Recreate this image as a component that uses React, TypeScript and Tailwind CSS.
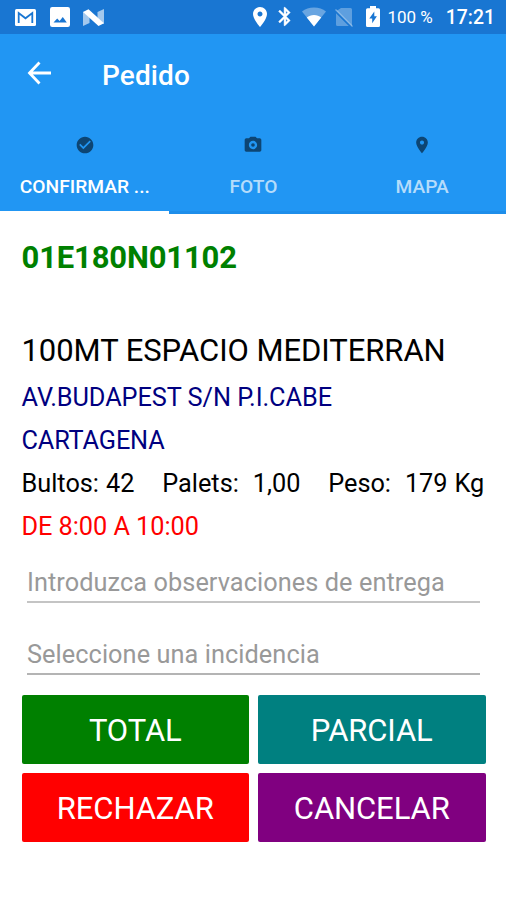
import React, { useState } from 'react';
import clsx from 'clsx';

type TabId = 'confirmar' | 'foto' | 'mapa';

const CheckIcon = () => (
  <svg viewBox="0 0 24 24" className="w-5 h-5" fill="currentColor">
    <path d="M12 2C6.48 2 2 6.48 2 12s4.48 10 10 10 10-4.48 10-10S17.52 2 12 2zm-2 15l-5-5 1.41-1.41L10 14.17l7.59-7.59L19 8l-9 9z" />
  </svg>
);

const CameraIcon = () => (
  <svg viewBox="0 0 24 24" className="w-5 h-5" fill="currentColor">
    <circle cx="12" cy="12" r="2.2" />
    <path d="M9 2L7.17 4H4c-1.1 0-2 .9-2 2v12c0 1.1.9 2 2 2h16c1.1 0 2-.9 2-2V6c0-1.1-.9-2-2-2h-3.17L15 2H9zm3 15c-2.76 0-5-2.24-5-5s2.24-5 5-5 5 2.24 5 5-2.24 5-5 5z" />
  </svg>
);

const PinIcon = ({ className }: { className: string }) => (
  <svg viewBox="0 0 24 24" className={className} fill="currentColor">
    <path d="M12 2C8.13 2 5 5.13 5 9c0 5.25 7 13 7 13s7-7.75 7-13c0-3.87-3.13-7-7-7zm0 9.5c-1.38 0-2.5-1.12-2.5-2.5s1.12-2.5 2.5-2.5 2.5 1.12 2.5 2.5-1.12 2.5-2.5 2.5z" />
  </svg>
);

const StatusBar = () => (
  <div className="h-[34px] bg-[#1976d2] text-white flex items-center justify-between pl-[15px] pr-[11px]">
    <div className="flex items-center">
      {/* Gmail */}
      <svg viewBox="0 0 21 17" className="w-[21px] h-[17px]">
        <rect width="21" height="17" rx="1.5" fill="#fff" />
        <path d="M3.7 14V4l6.8 5.3L17.3 4v10" fill="none" stroke="#1976d2" strokeWidth="1.8" />
      </svg>
      {/* Galería */}
      <svg viewBox="0 0 20 20" className="w-5 h-5 ml-[14px]">
        <rect width="20" height="20" rx="2.2" fill="#fff" />
        <path d="M3.5 15.6l3.7-4.2 2.4 2.5 3.2-3.9 4 5.6z" fill="#1976d2" />
      </svg>
      {/* Android N */}
      <svg viewBox="0 0 21 17" className="w-[21px] h-[17px] ml-[13px]">
        <path d="M0 2.5L6.5 8v6L0 17zM14.5 3L21 0v15l-6.5-6z" fill="#fff" fillOpacity=".6" />
        <path d="M0 3L5.5.3 21 14.3 15.5 17z" fill="#fff" />
      </svg>
    </div>
    <div className="flex items-center">
      <PinIcon className="w-6 h-6" />
      <svg viewBox="0 0 24 24" className="w-[22px] h-[23px] ml-[2px]" fill="currentColor" stroke="currentColor" strokeWidth=".5">
        <path d="M17.71 7.71L12 2h-1v7.59L6.41 5 5 6.41 10.59 12 5 17.59 6.41 19 11 14.41V22h1l5.71-5.71-4.3-4.29 4.3-4.29zM13 5.83l1.88 1.88L13 9.59V5.83zm1.88 10.46L13 18.17v-3.76l1.88 1.88z" />
      </svg>
      <svg viewBox="0 0 24 20" className="w-6 h-5 ml-[6px]">
        <path d="M0 4.5C3.2 2 7.3.5 12 .5S20.8 2 24 4.5L12 19.5z" fill="#fff" fillOpacity=".35" />
        <path d="M4.8 10.5C6.7 8.9 9.2 8 12 8s5.300.9 7.200 2.500L12 19.5z" fill="#fff" />
      </svg>
      <svg viewBox="0 0 20 20" className="w-5 h-5 ml-[8px]">
        <path d="M7 1h9.500Q18 1 18 2.500V19L2.800 3.800zM2 6.200L14.800 19H3.500Q2 19 2 17.500z" fill="#fff" fillOpacity=".3" />
        <path d="M1.500 2.500l17 17" stroke="#fff" strokeOpacity=".4" strokeWidth="1.3" />
      </svg>
      <svg viewBox="0 0 14 21" className="w-[14px] h-[21px] ml-[12px]">
        <path d="M4 0h6v2.200h2.500Q14 2.200 14 3.700V19.500Q14 21 12.500 21h-11Q0 21 0 19.500V3.700Q0 2.200 1.500 2.200H4z" fill="#fff" />
        <path d="M8.300 5.500L3.300 12.500h2.900v4.700l4.700-7H8.300z" fill="#1976d2" />
      </svg>
      <span className="text-[17px] ml-[7px] mt-[2px] whitespace-pre">100 %</span>
      <span className="text-[19.4px] font-medium ml-[13px] mt-[2px]">17:21</span>
    </div>
  </div>
);

const tabs: { id: TabId; label: string; icon: React.ReactNode }[] = [
  { id: 'confirmar', label: 'CONFIRMAR ...', icon: <CheckIcon /> },
  { id: 'foto', label: 'FOTO', icon: <CameraIcon /> },
  { id: 'mapa', label: 'MAPA', icon: <PinIcon className="w-5 h-5" /> },
];

const acciones = [
  { label: 'TOTAL', color: 'bg-[#008000]' },
  { label: 'PARCIAL', color: 'bg-[#008080]' },
  { label: 'RECHAZAR', color: 'bg-[#ff0000]' },
  { label: 'CANCELAR', color: 'bg-[#800080]' },
];

export default function App() {
  const [tab, setTab] = useState<TabId>('confirmar');

  return (
    <div className="w-[506px] h-[900px] bg-white overflow-hidden font-['Roboto',sans-serif]">
      <StatusBar />

      <header className="bg-[#2196f3] text-white">
        <div className="h-[78px] flex items-center pl-[27px]">
          <svg viewBox="0 0 24 24" className="w-6 h-6" fill="none" stroke="currentColor" strokeWidth="2.8">
            <path d="M24 12H3M12.500 1.500L2.500 12l10 10.500" />
          </svg>
          <h1 className="ml-[51px] mt-[5px] text-[28px] leading-8 font-medium tracking-[0.1px]">Pedido</h1>
        </div>

        <nav className="grid grid-cols-3 h-[102px]">
          {tabs.map((t) => (
            <button
              key={t.id}
              onClick={() => setTab(t.id)}
              className={clsx(
                'flex flex-col items-center pt-[23px] pl-px border-b-[3px]',
                tab === t.id ? 'border-white text-white' : 'border-[#1e8eea] text-[#b5dcfb]'
              )}
            >
              <span className="text-[#0d4573]">{t.icon}</span>
              <span className="mt-[20px] text-[19.2px] leading-6 font-medium">{t.label}</span>
            </button>
          ))}
        </nav>
      </header>

      <main className="pl-[21.5px] pr-[20.5px] pt-[24px]">
        <p className="text-[31px] leading-10 font-bold text-[#008000] tracking-[-0.15px]">01E180N01102</p>

        <div className="mt-[53px] text-[25.3px] leading-[43px] whitespace-pre text-[#000080]">
          <p className="text-[31px] leading-10 mb-[4px] text-black tracking-[-0.05px]">100MT ESPACIO MEDITERRAN</p>
          <p className="mt-[5px] tracking-[-0.05px]">AV.BUDAPEST S/N P.I.CABE</p>
          <p className="tracking-[-0.15px]">CARTAGENA</p>
          <p className="text-black [word-spacing:0.68px]">Bultos: 42    Palets:  1,00    Peso:  179 Kg</p>
          <p className="text-[#ff0000] tracking-[-0.05px]">DE 8:00 A 10:00</p>
        </div>

        <div className="ml-[5.5px] mr-[5.5px] text-[25.3px] tracking-[0.07px]">
          <input
            className="block w-full h-[55px] pt-[15px] border-b-2 border-[#c4c4c4] outline-none placeholder:text-[#999999]"
            placeholder="Introduzca observaciones de entrega"
          />
          <input
            className="block w-full h-[72px] pt-[33px] border-b-2 border-[#b4b4b4] outline-none placeholder:text-[#999999]"
            placeholder="Seleccione una incidencia"
          />
        </div>

        <div className="grid grid-cols-2 gap-[9px] mt-[20px]">
          {acciones.map((a) => (
            <button
              key={a.label}
              className={clsx('h-[69px] pt-[4px] rounded-[2px] text-[31px] tracking-[-0.1px] text-white', a.color)}
            >
              {a.label}
            </button>
          ))}
        </div>
      </main>
    </div>
  );
}
